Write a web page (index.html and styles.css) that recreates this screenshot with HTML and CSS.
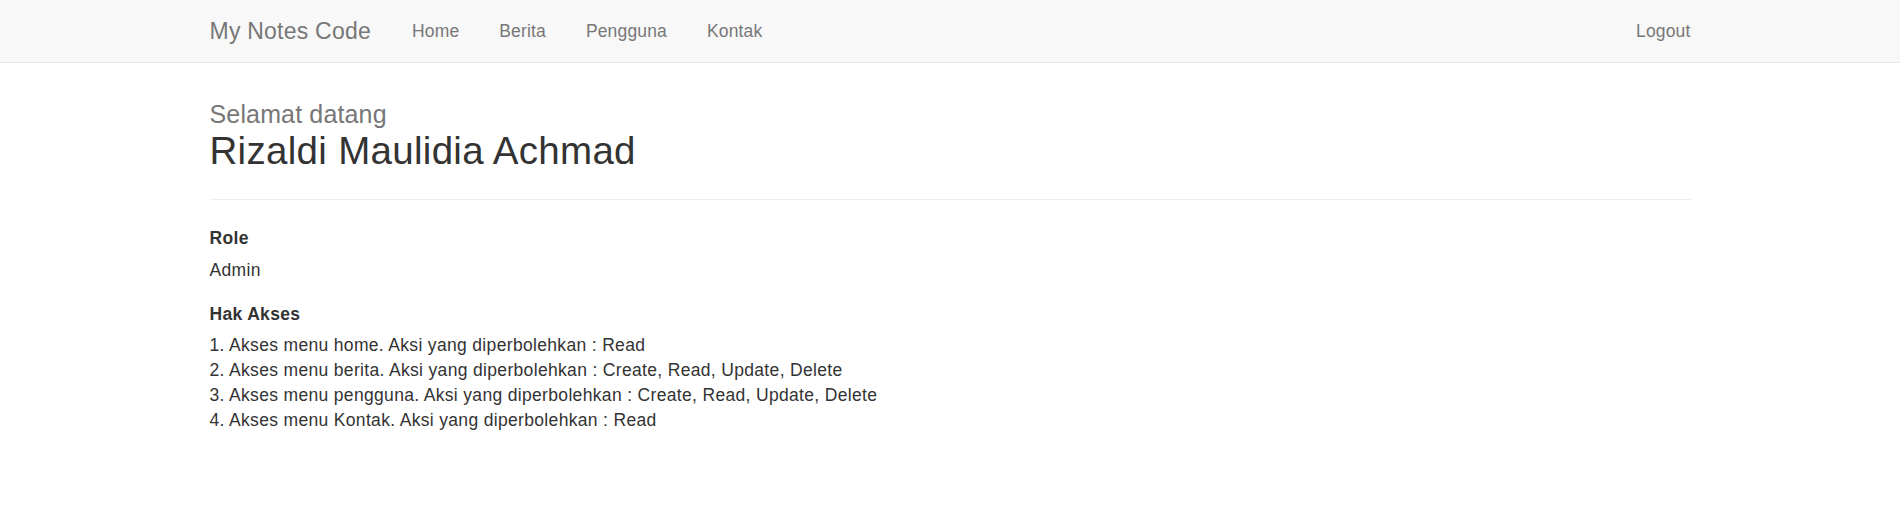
FILE: index.html
```html
<!DOCTYPE html>
<html lang="id">
<head>
  <meta charset="UTF-8" />
  <meta name="viewport" content="width=device-width, initial-scale=1.0">
  <title>Dashboard | My Notes Code</title>
  <link rel="stylesheet" href="styles.css">
</head>
<body>
  <nav class="navbar">
    <div class="container navbar-inner">
      <a class="navbar-brand" href="#">My Notes Code</a>
      <ul class="nav">
        <li><a href="#">Home</a></li>
        <li><a href="#">Berita</a></li>
        <li><a href="#">Pengguna</a></li>
        <li><a href="#">Kontak</a></li>
      </ul>
      <ul class="nav nav-right">
        <li><a href="#">Logout</a></li>
      </ul>
    </div>
  </nav>

  <div class="container">
    <div class="page-header">
      <p class="welcome">Selamat datang</p>
      <h2 class="user-name">Rizaldi Maulidia Achmad</h2>
    </div>

    <div class="info">
      <h5 class="info-title">Role</h5>
      <p class="info-value">Admin</p>

      <h5 class="info-title info-title-access">Hak Akses</h5>
      <ol class="access-list">
        <li>1. Akses menu home. Aksi yang diperbolehkan : Read</li>
        <li>2. Akses menu berita. Aksi yang diperbolehkan : Create, Read, Update, Delete</li>
        <li>3. Akses menu pengguna. Aksi yang diperbolehkan : Create, Read, Update, Delete</li>
        <li>4. Akses menu Kontak. Aksi yang diperbolehkan : Read</li>
      </ol>
    </div>
  </div>
</body>
</html>
```

FILE: styles.css
```css
:root {
  --text-color: #333;
  --muted-color: #777;
  --navbar-bg: #f8f8f8;
  --navbar-border: #e7e7e7;
  --rule-color: #eee;
}

* {
  box-sizing: border-box;
}

body {
  margin: 0;
  font-family: "Liberation Sans", Arial, sans-serif;
  font-size: 17.5px;
  line-height: 25px;
  letter-spacing: 0.33px;
  color: var(--text-color);
  background: white;
}

a {
  text-decoration: none;
}

.container {
  max-width: 1481px;
  margin: 0 auto;
}

/* navbar */
.navbar {
  background-color: var(--navbar-bg);
  border-bottom: 1px solid var(--navbar-border);
}

.navbar-inner {
  display: flex;
  align-items: center;
  height: 62px;
}

.navbar-brand {
  font-size: 23px;
  line-height: 25px;
  letter-spacing: 0.23px;
  color: var(--muted-color);
  padding-right: 21px;
}

.nav {
  display: flex;
  list-style: none;
  margin: 0;
  padding: 0;
}

.nav a {
  display: block;
  padding: 0 20px;
  letter-spacing: 0.15px;
  color: var(--muted-color);
}

.nav-right {
  margin-left: auto;
}

.nav-right a {
  padding-right: 0;
}

/* header */
.page-header {
  margin-top: 37px;
  padding-bottom: 27px;
  border-bottom: 1px solid var(--rule-color);
}

.welcome {
  margin: 0;
  font-size: 25px;
  line-height: 29px;
  letter-spacing: 0.15px;
  color: var(--muted-color);
}

.user-name {
  margin: 0;
  font-size: 38.5px;
  line-height: 43px;
  letter-spacing: 0.3px;
  font-weight: normal;
}

/* info */
.info {
  padding-top: 26px;
}

.info-title {
  margin: 0;
  font-size: 17.5px;
  font-weight: bold;
}

.info-value {
  margin: 7px 0 0;
}

.info-title-access {
  margin-top: 19px;
}

.access-list {
  list-style: none;
  margin: 6px 0 0;
  padding: 0;
}
```
